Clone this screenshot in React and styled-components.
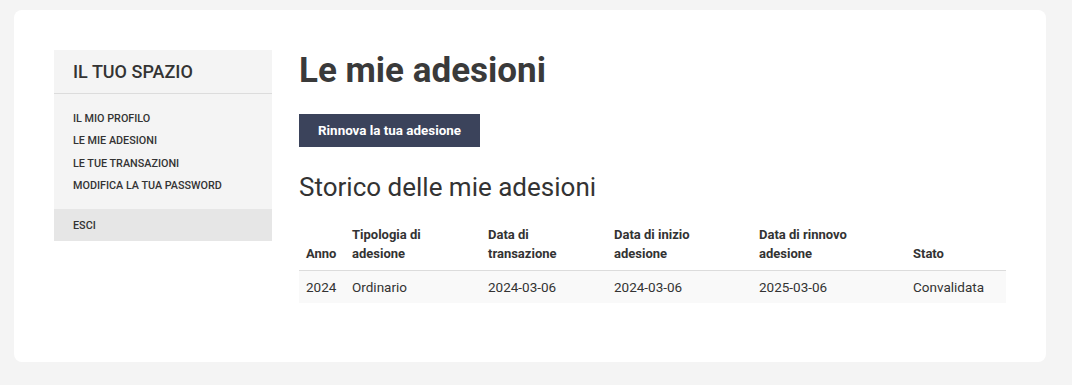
import React from "react";
import styled, { createGlobalStyle } from "styled-components";

const GlobalStyle = createGlobalStyle`
  html, body {
    margin: 0;
    padding: 0;
    background: #f4f4f4;
    font-family: Roboto, "Liberation Sans", sans-serif;
    color: #333;
  }
`;

const Page = styled.div`
  padding: 10px 26px 23px 14px;
`;

const Card = styled.div`
  background: #fff;
  border-radius: 8px;
  height: 352px;
  box-sizing: border-box;
  padding: 40px 40px;
  display: flex;
  align-items: flex-start;
  gap: 27px;
`;

const Sidebar = styled.aside`
  width: 218px;
  flex-shrink: 0;
  background: #f4f4f4;
`;

const SideTitle = styled.div`
  height: 43px;
  display: flex;
  align-items: center;
  padding-left: 19px;
  font-size: 18px;
  font-weight: 500;
  color: #333;
  border-bottom: 1px solid #dcdcdc;
`;

const Menu = styled.ul`
  list-style: none;
  margin: 0;
  padding: 14px 0 12px;
`;

const MenuItem = styled.li`
  font-size: 10.8px;
  font-weight: 500;
  line-height: 22.3px;
  padding-left: 19px;
  color: #333;
  text-transform: uppercase;
`;

const Logout = styled.div`
  height: 32px;
  background: #e6e6e6;
  display: flex;
  align-items: center;
  padding-left: 19px;
  font-size: 10.8px;
  font-weight: 500;
  color: #333;
`;

const Main = styled.main`
  flex: 1;
  min-width: 0;
`;

const Title = styled.h1`
  margin: 0;
  font-size: 35px;
  line-height: 42px;
  font-weight: 700;
  color: #3a3a3a;
`;

const Button = styled.button`
  display: block;
  margin-top: 22px;
  height: 33px;
  padding: 0 19px;
  border: 0;
  background: #3b435b;
  color: #fff;
  font-family: Roboto, "Liberation Sans", sans-serif;
  font-size: 13.4px;
  font-weight: 700;
  cursor: pointer;
`;

const SubTitle = styled.h2`
  margin: 25px 0 0;
  font-size: 26px;
  line-height: 31px;
  font-weight: 400;
  color: #333;
`;

const Table = styled.table`
  margin-top: 14px;
  width: 100%;
  table-layout: fixed;
  border-collapse: collapse;
  font-size: 13.5px;
`;

const Th = styled.th`
  width: ${(p) => p.w - 14}px;
  text-align: left;
  vertical-align: bottom;
  font-size: 13px;
  font-weight: 700;
  line-height: 19px;
  padding: 8px 7px 7px;
  color: #333;
  border-bottom: 1px solid #dcdcdc;
`;

const Row = styled.tr`
  background: #f9f9f9;
`;

const Td = styled.td`
  padding: 0 7px;
  height: 32px;
  color: #333;
`;

const columns = [
  { label: "Anno", w: 46 },
  { label: "Tipologia di adesione", w: 136 },
  { label: "Data di transazione", w: 126 },
  { label: "Data di inizio adesione", w: 145 },
  { label: "Data di rinnovo adesione", w: 154 },
  { label: "Stato", w: 100 },
];

const rows = [
  ["2024", "Ordinario", "2024-03-06", "2024-03-06", "2025-03-06", "Convalidata"],
];

const App = () => {
  return (
    <Page>
      <GlobalStyle />
      <Card>
        <Sidebar>
          <SideTitle>IL TUO SPAZIO</SideTitle>
          <Menu>
            <MenuItem>Il mio profilo</MenuItem>
            <MenuItem>Le mie adesioni</MenuItem>
            <MenuItem>Le tue transazioni</MenuItem>
            <MenuItem>Modifica la tua password</MenuItem>
          </Menu>
          <Logout>ESCI</Logout>
        </Sidebar>
        <Main>
          <Title>Le mie adesioni</Title>
          <Button>Rinnova la tua adesione</Button>
          <SubTitle>Storico delle mie adesioni</SubTitle>
          <Table>
            <thead>
              <tr>
                {columns.map((c) => (
                  <Th key={c.label} w={c.w}>
                    {c.label}
                  </Th>
                ))}
              </tr>
            </thead>
            <tbody>
              {rows.map((r, i) => (
                <Row key={i}>
                  {r.map((v, j) => (
                    <Td key={j}>{v}</Td>
                  ))}
                </Row>
              ))}
            </tbody>
          </Table>
        </Main>
      </Card>
    </Page>
  );
};

export default App;
